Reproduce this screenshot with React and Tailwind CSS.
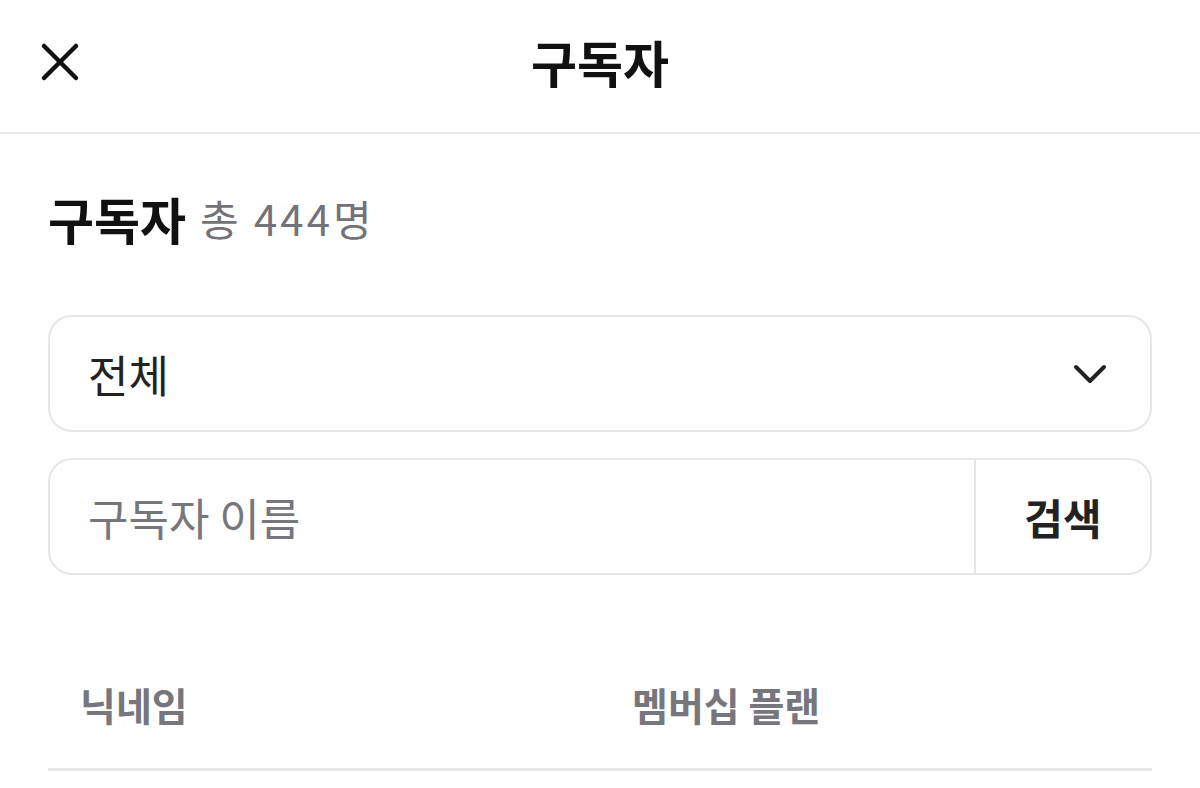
import React from 'react';

const font = { fontFamily: '"Noto Sans CJK KR", "Noto Sans", sans-serif' };

function CloseIcon() {
  return (
    <svg width="40" height="40" viewBox="0 0 40 40" fill="none" stroke="#111" strokeWidth="4.5" strokeLinecap="round">
      <path d="M4 4 L36 36 M36 4 L4 36" />
    </svg>
  );
}

function ChevronDown() {
  return (
    <svg width="34" height="20" viewBox="0 0 34 20" fill="none" stroke="#222" strokeWidth="4" strokeLinecap="round" strokeLinejoin="round">
      <path d="M3 3 L17 17 L31 3" />
    </svg>
  );
}

export default function App() {
  return (
    <div className="w-[1200px] h-[788px] bg-white overflow-hidden text-[#111]" style={font}>
      <header className="relative h-[134px] border-b-2 border-[#e8e8e8] flex items-center justify-center">
        <button className="absolute left-[40px] top-[42px]">
          <CloseIcon />
        </button>
        <h1 className="text-[50px] font-bold leading-none mt-[-10px]">구독자</h1>
      </header>

      <main className="px-12">
        <div className="pt-[56px] box-content h-[56px] flex items-center gap-[14px] leading-none">
          <span className="text-[50px] font-bold">구독자</span>
          <span className="text-[42px] text-[#727278] tracking-[3px]">총 444명</span>
        </div>

        <div className="mt-[69px] h-[117px] border-2 border-[#e6e6e6] rounded-[24px] flex items-center justify-between pl-[38px] pr-[43px]">
          <span className="text-[44px] text-[#222]">전체</span>
          <ChevronDown />
        </div>

        <div className="mt-[26px] h-[117px] border-2 border-[#e6e6e6] rounded-[24px] flex items-stretch">
          <div className="flex-1 flex items-center pl-[38px] text-[44px] text-[#76767c]">구독자 이름</div>
          <div className="w-[176px] border-l-2 border-[#e6e6e6] flex items-center justify-center text-[42px] font-bold text-[#222]">
            검색
          </div>
        </div>

        <div className="mt-[65px] h-[131px] border-b-[3px] border-[#e8e8e8] grid grid-cols-2 items-center text-[39px] font-bold text-[#76767c]">
          <div className="pl-8">닉네임</div>
          <div className="pl-8">멤버십 플랜</div>
        </div>
      </main>
    </div>
  );
}
